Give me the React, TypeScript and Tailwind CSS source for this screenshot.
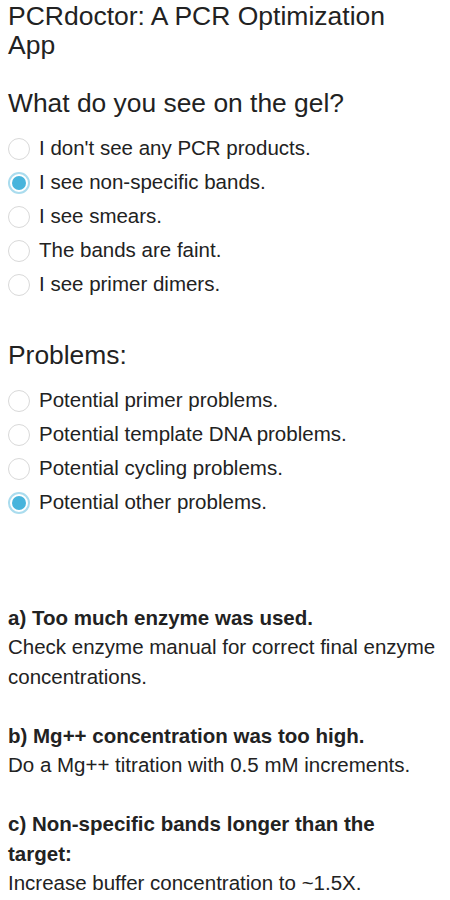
import { useState } from 'react';

const gelOptions = [
  "I don't see any PCR products.",
  'I see non-specific bands.',
  'I see smears.',
  'The bands are faint.',
  'I see primer dimers.',
];

const problemOptions = [
  'Potential primer problems.',
  'Potential template DNA problems.',
  'Potential cycling problems.',
  'Potential other problems.',
];

function Radio({ label, checked, onClick }: { label: string; checked: boolean; onClick: () => void }) {
  return (
    <label onClick={onClick} className="flex items-center h-[34px] cursor-pointer">
      {checked ? (
        <span className="w-[22px] h-[22px] shrink-0 rounded-full border-[2px] border-[#aadcee] bg-white flex items-center justify-center">
          <span className="w-[14px] h-[14px] rounded-full bg-[#47b4dc]" />
        </span>
      ) : (
        <span className="w-[22px] h-[22px] shrink-0 rounded-full border-[1.5px] border-[#d9d9d9] bg-white" />
      )}
      <span className="ml-[9px] text-[20.5px] text-[#222]">{label}</span>
    </label>
  );
}

export default function App() {
  const [gel, setGel] = useState(1);
  const [problem, setProblem] = useState(3);

  return (
    <div className="min-h-[900px] bg-white px-[8px] pt-[1.5px] text-[#222]" style={{ fontFamily: '"Liberation Sans", Arial, sans-serif' }}>
      <h1 className="text-[26.5px] leading-[29px] pr-[20px]">PCRdoctor: A PCR Optimization App</h1>

      <h2 className="text-[26.4px] leading-[29px] mt-[29px] mb-[14px]">What do you see on the gel?</h2>
      <div className="flex flex-col">
        {gelOptions.map((o, i) => (
          <Radio key={o} label={o} checked={gel === i} onClick={() => setGel(i)} />
        ))}
      </div>

      <h2 className="text-[26.4px] leading-[29px] mt-[39.5px] mb-[13.5px]">Problems:</h2>
      <div className="flex flex-col">
        {problemOptions.map((o, i) => (
          <Radio key={o} label={o} checked={problem === i} onClick={() => setProblem(i)} />
        ))}
      </div>

      <div className="mt-[83px] text-[20.5px] leading-[29.5px]">
        <p className="font-bold">a) Too much enzyme was used.</p>
        <p>Check enzyme manual for correct final enzyme concentrations.</p>
        <p className="font-bold mt-[29.5px]">b) Mg++ concentration was too high.</p>
        <p>Do a Mg++ titration with 0.5 mM increments.</p>
        <p className="font-bold mt-[29.5px]">c) Non-specific bands longer than the target:</p>
        <p>Increase buffer concentration to ~1.5X.</p>
      </div>
    </div>
  );
}
